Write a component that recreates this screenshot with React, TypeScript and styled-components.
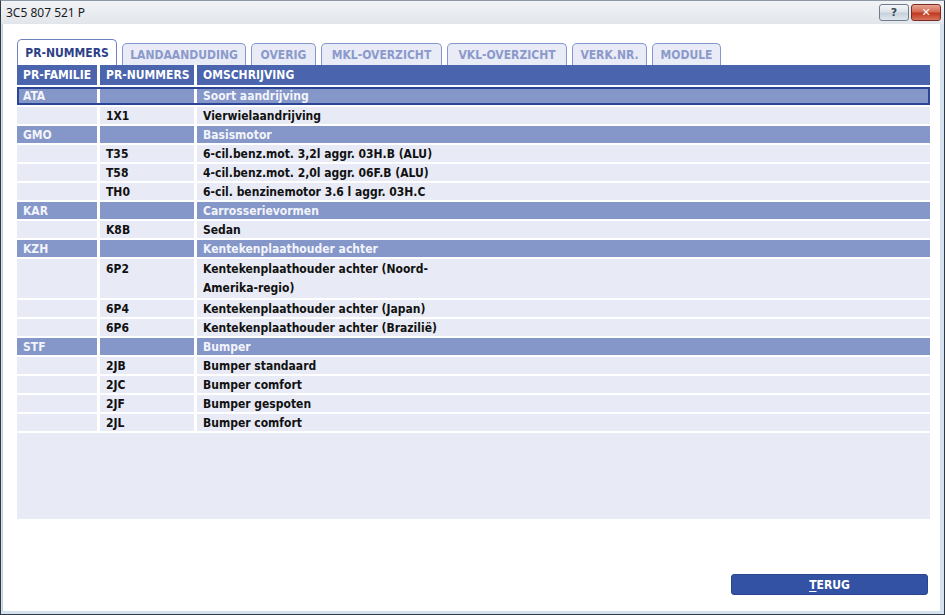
import React from 'react'
import styled, { createGlobalStyle } from 'styled-components'

const GlobalStyle = createGlobalStyle`
  html, body {
    margin: 0;
    padding: 0;
    background: #ffffff;
    overflow: hidden;
  }
`

const FONT = `"DejaVu Sans Condensed", "DejaVu Sans", "Liberation Sans", sans-serif`

const Window = styled.div`
  width: 945px;
  height: 615px;
  box-sizing: border-box;
  display: flex;
  flex-direction: column;
  background: #d5e2ee;
  border: 1px solid #2e3a46;
  border-top-color: #8d98a4;
`

const TitleBar = styled.div`
  height: 23px;
  flex-shrink: 0;
  display: flex;
  align-items: center;
  justify-content: space-between;
  padding: 0 3px 0 5px;
  background: linear-gradient(#f1f3f6, #e2e6eb);
`

const Title = styled.span`
  font-family: "Noto Sans", "Open Sans", sans-serif;
  font-size: 12px;
  color: #1b1b1b;
`

const Caption = styled.div`
  display: flex;
  gap: 2px;
  align-self: flex-start;
  margin-top: 3px;
`

const CaptionButton = styled.div<{ $close?: boolean }>`
  width: 30px;
  height: 17px;
  box-sizing: border-box;
  border: 1px solid ${({ $close }) => ($close ? '#7c2c20' : '#707c8c')};
  border-radius: 3px;
  display: flex;
  align-items: center;
  justify-content: center;
  font-family: "DejaVu Sans", sans-serif;
  font-weight: bold;
  font-size: 11px;
  color: ${({ $close }) => ($close ? '#ffffff' : '#3c4654')};
  background: ${({ $close }) =>
    $close
      ? 'linear-gradient(#e6a594 0%, #d56b54 45%, #c0381f 55%, #d7735b 100%)'
      : 'linear-gradient(#f4f6f9 0%, #dde3ea 45%, #c8d1dc 55%, #e0e7ee 100%)'};
`

const Client = styled.div`
  flex: 1;
  display: flex;
  flex-direction: column;
  background: #ffffff;
  margin: 0 4px 3px 1px;
  border-left: 1px solid #c4ced8;
  padding: 15px 10px 16px 14px;
  min-height: 0;
`

const Tabs = styled.div`
  display: flex;
  align-items: flex-end;
  gap: 5px;
  height: 26px;
  flex-shrink: 0;
`

const Tab = styled.div<{ $active?: boolean; $width: number }>`
  width: ${({ $width }) => $width}px;
  height: ${({ $active }) => ($active ? '26px' : '22px')};
  box-sizing: border-box;
  display: flex;
  align-items: center;
  justify-content: center;
  border: 1px solid ${({ $active }) => ($active ? '#6f82c0' : '#8596cc')};
  border-bottom: none;
  border-radius: 5px 5px 0 0;
  background: ${({ $active }) => ($active ? '#ffffff' : '#e9ecf6')};
  color: ${({ $active }) => ($active ? '#2c3f88' : '#8b99cb')};
  font-family: ${FONT};
  font-weight: bold;
  font-size: 12px;
  white-space: nowrap;
`

const Table = styled.div`
  height: 454px;
  flex-shrink: 0;
  display: flex;
  flex-direction: column;
  gap: 2px;
`

const Row = styled.div<{ $selected?: boolean }>`
  position: relative;
  display: grid;
  grid-template-columns: 80px 94px 1fr;
  column-gap: 3px;

  ${({ $selected }) =>
    $selected &&
    `
    &::after {
      content: '';
      position: absolute;
      inset: 0;
      border: 2px solid #2c4697;
      pointer-events: none;
    }
  `}
`

type Kind = 'head' | 'group' | 'item'

const Cell = styled.div<{ $kind: Kind; $h: number; $multi?: boolean }>`
  box-sizing: border-box;
  padding: ${({ $kind }) => ($kind === 'head' ? '0 6px' : '1px 6px 0')};
  height: ${({ $h }) => $h}px;
  line-height: ${({ $h, $multi, $kind }) => ($multi ? 19 : $kind === 'head' ? $h : $h - 1)}px;
  font-family: ${FONT};
  font-weight: bold;
  font-size: 12px;
  white-space: ${({ $multi }) => ($multi ? 'pre-line' : 'nowrap')};
  background: ${({ $kind }) =>
    $kind === 'head' ? '#4a65ae' : $kind === 'group' ? '#8596c8' : '#e8ebf5'};
  color: ${({ $kind }) =>
    $kind === 'head' ? '#ffffff' : $kind === 'group' ? '#f2f4fb' : '#111111'};
`

const Filler = styled.div`
  flex: 1;
  background: #e8ebf5;
`

const Footer = styled.div`
  margin-top: auto;
  display: flex;
  justify-content: flex-end;
  padding-right: 2px;
`

const BackButton = styled.button`
  width: 197px;
  height: 21px;
  border: 1px solid #2a468f;
  border-radius: 3px;
  background: #3352a3;
  color: #ffffff;
  font-family: ${FONT};
  font-weight: bold;
  font-size: 12px;
  padding: 0;

  u {
    text-decoration-thickness: 1px;
    text-underline-offset: 2px;
  }
`

type Line = { fam: string; nr: string; text: string; kind: 'group' | 'item'; selected?: boolean }

const rows: Line[] = [
  { fam: 'ATA', nr: '', text: 'Soort aandrijving', kind: 'group', selected: true },
  { fam: '', nr: '1X1', text: 'Vierwielaandrijving', kind: 'item' },
  { fam: 'GMO', nr: '', text: 'Basismotor', kind: 'group' },
  { fam: '', nr: 'T35', text: '6-cil.benz.mot. 3,2l aggr. 03H.B (ALU)', kind: 'item' },
  { fam: '', nr: 'T58', text: '4-cil.benz.mot. 2,0l aggr. 06F.B (ALU)', kind: 'item' },
  { fam: '', nr: 'TH0', text: '6-cil. benzinemotor 3.6 l aggr. 03H.C', kind: 'item' },
  { fam: 'KAR', nr: '', text: 'Carrosserievormen', kind: 'group' },
  { fam: '', nr: 'K8B', text: 'Sedan', kind: 'item' },
  { fam: 'KZH', nr: '', text: 'Kentekenplaathouder achter', kind: 'group' },
  { fam: '', nr: '6P2', text: 'Kentekenplaathouder achter (Noord-\nAmerika-regio)', kind: 'item' },
  { fam: '', nr: '6P4', text: 'Kentekenplaathouder achter (Japan)', kind: 'item' },
  { fam: '', nr: '6P6', text: 'Kentekenplaathouder achter (Brazilië)', kind: 'item' },
  { fam: 'STF', nr: '', text: 'Bumper', kind: 'group' },
  { fam: '', nr: '2JB', text: 'Bumper standaard', kind: 'item' },
  { fam: '', nr: '2JC', text: 'Bumper comfort', kind: 'item' },
  { fam: '', nr: '2JF', text: 'Bumper gespoten', kind: 'item' },
  { fam: '', nr: '2JL', text: 'Bumper comfort', kind: 'item' },
]

const tabs: [string, number][] = [
  ['PR-NUMMERS', 100],
  ['LANDAANDUDING', 124],
  ['OVERIG', 65],
  ['MKL-OVERZICHT', 121],
  ['VKL-OVERZICHT', 120],
  ['VERK.NR.', 75],
  ['MODULE', 69],
]

export default function App() {
  return (
    <>
      <GlobalStyle />
      <Window>
        <TitleBar>
          <Title>3C5 807 521 P</Title>
          <Caption>
            <CaptionButton>?</CaptionButton>
            <CaptionButton $close>✕</CaptionButton>
          </Caption>
        </TitleBar>
        <Client>
          <Tabs>
            {tabs.map(([t, w], i) => (
              <Tab key={t} $width={w} $active={i === 0}>
                {t}
              </Tab>
            ))}
          </Tabs>
          <Table>
            <Row>
              <Cell $kind="head" $h={20}>PR-FAMILIE</Cell>
              <Cell $kind="head" $h={20}>PR-NUMMERS</Cell>
              <Cell $kind="head" $h={20}>OMSCHRIJVING</Cell>
            </Row>
            {rows.map((r, i) => {
              const multi = r.text.includes('\n')
              const h = multi ? 39 : r.selected ? 18 : 17
              return (
                <Row key={i} $selected={r.selected}>
                  <Cell $kind={r.kind} $h={h} $multi={multi}>{r.fam}</Cell>
                  <Cell $kind={r.kind} $h={h} $multi={multi}>{r.nr}</Cell>
                  <Cell $kind={r.kind} $h={h} $multi={multi}>{r.text}</Cell>
                </Row>
              )
            })}
            <Filler />
          </Table>
          <Footer>
            <BackButton>
              <u>T</u>ERUG
            </BackButton>
          </Footer>
        </Client>
      </Window>
    </>
  )
}
